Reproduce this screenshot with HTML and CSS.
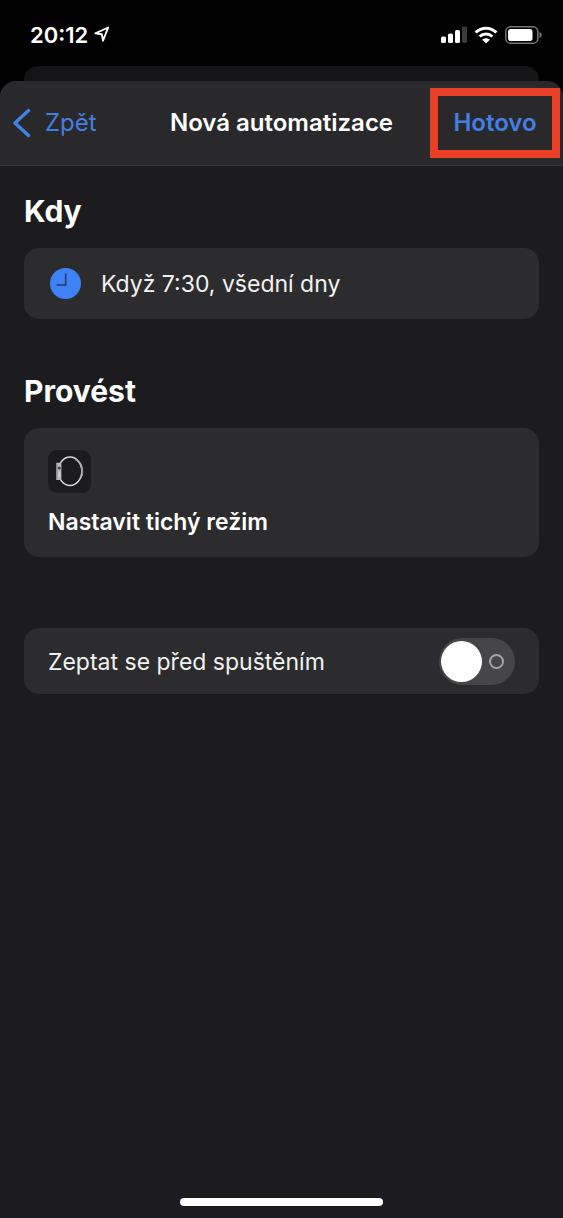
FILE: index.html
```html
<!DOCTYPE html>
<html lang="cs">
<head>
<meta charset="utf-8">
<meta name="viewport" content="width=device-width, initial-scale=1">
<title>Nová automatizace</title>
<link rel="stylesheet" href="styles.css">
</head>
<body>
<div class="status-bar">
  <div class="status-left">
    <time class="clock-time">20:12</time>
    <svg class="location" width="16" height="17" viewBox="0 0 16 17" aria-hidden="true"><path d="M1.4 7.3 14.2 1.5 9 14.6 7.8 8.3Z" fill="none" stroke="#fff" stroke-width="1.9" stroke-linejoin="round"/></svg>
  </div>
  <div class="status-right">
    <svg width="26" height="17" viewBox="0 0 26 17" aria-hidden="true"><g fill="#fff"><rect x="0" y="10.500" width="5" height="6.500" rx="1.5"/><rect x="7" y="7.500" width="5" height="9.500" rx="1.5"/><rect x="14" y="4" width="5" height="13" rx="1.5"/></g><rect x="21" y="0.500" width="5" height="16.500" rx="1.500" fill="#3b3b3b"/></svg>
    <svg width="24" height="18" viewBox="0 0 24 18" aria-hidden="true"><g fill="none" stroke="#fff" stroke-width="3"><path d="M1.600 6.500C7.500 0.700 16.500 0.700 22.400 6.500"/><path d="M5.700 10.500C9.300 7.100 14.700 7.100 18.300 10.500"/></g><path d="M8.200 13.700C10.300 11.700 13.700 11.700 15.800 13.700L12 17.500Z" fill="#fff"/></svg>
    <svg width="37" height="18" viewBox="0 0 37 18" aria-hidden="true"><rect x="0.800" y="0.800" width="32" height="16.400" rx="4.800" fill="none" stroke="#777" stroke-width="1.500"/><rect x="3" y="3" width="24.500" height="12" rx="2.800" fill="#fff"/><path d="M34.500 6V12C37.400 11 37.400 7 34.500 6Z" fill="#777"/></svg>
  </div>
</div>
<div class="back-sheet"></div>
<div class="sheet">
  <header class="nav">
    <button class="back" type="button">
      <svg width="18" height="30" viewBox="0 0 18 30" aria-hidden="true"><path d="M15.500 2.500 2 15 15.500 27.500" fill="none" stroke="currentColor" stroke-width="3.400" stroke-linecap="round" stroke-linejoin="round"/></svg>
      <span>Zpět</span>
    </button>
    <h1 class="nav-title">Nová automatizace</h1>
    <button class="done" type="button">Hotovo</button>
  </header>
  <main class="content">
    <section class="section">
      <h2 class="heading">Kdy</h2>
      <div class="card trigger">
        <svg width="31" height="31" viewBox="0 0 31 31" aria-hidden="true"><circle cx="15.500" cy="15.500" r="15.500" fill="#3d82f7"/><path d="M15.700 5.500V17H6.500" fill="none" stroke="#273f70" stroke-width="1.700"/></svg>
        <span>Když 7:30, všední dny</span>
      </div>
    </section>
    <section class="section">
      <h2 class="heading">Provést</h2>
      <div class="card action">
        <span class="app-icon">
          <svg width="43" height="43" viewBox="0 0 43 43" aria-hidden="true"><ellipse cx="22" cy="21.300" rx="11.800" ry="14.200" fill="none" stroke="#dadada" stroke-width="1.500"/><path d="M27.500 9.300C32.500 12 34.300 17 34.200 21.500C34.100 24 33.600 26 32.700 28" fill="none" stroke="#a8a8a8" stroke-width="1.800"/><path d="M34.500 17.500V26" stroke="#8d8d8d" stroke-width="1.200"/><rect x="8" y="12.800" width="5.400" height="17.200" rx="1" fill="#b9b9b9"/><path d="M8.800 13.500V29.300" stroke="#7a7a7a" stroke-width="1"/><circle cx="11.200" cy="18" r="1.600" fill="#4a4a4a"/><path d="M11.200 22V27" stroke="#dedede" stroke-width="1.200"/></svg>
        </span>
        <span class="action-name">Nastavit tichý režim</span>
      </div>
    </section>
    <label class="card ask">
      <span>Zeptat se před spuštěním</span>
      <input class="switch" type="checkbox" role="switch">
    </label>
  </main>
  <div class="home-bar"></div>
</div>
</body>
</html>
```
FILE: styles.css
```css
*,
*::before,
*::after {
  box-sizing: border-box;
}

body {
  display: flex;
  flex-direction: column;
  min-height: 100vh;
  margin: 0;
  background: #000;
  color: #fff;
  font-family: Inter, "Liberation Sans", sans-serif;
  font-size: 23px;
  line-height: 30px;
}

h1,
h2 {
  margin: 0;
}

button {
  font: inherit;
  color: #447fe3;
  background: none;
  border: 0;
  padding: 0;
}

svg {
  display: block;
}

.status-bar {
  display: flex;
  justify-content: space-between;
  align-items: center;
  height: 66px;
  padding: 3px 21px 0 30px;
}

.status-left,
.status-right {
  display: flex;
  align-items: center;
}

.status-left {
  gap: 6px;
}

.status-right {
  gap: 7px;
}

.clock-time {
  font-size: 22px;
  font-weight: 600;
}

.back-sheet {
  height: 15px;
  margin: 0 24px;
  background: #151517;
  border-radius: 14px 14px 0 0;
}

.sheet {
  display: flex;
  flex-direction: column;
  flex: 1;
  background: #1c1c1e;
  border-radius: 16px 16px 0 0;
}

.nav {
  display: grid;
  grid-template-columns: 1fr auto 1fr;
  align-items: center;
  height: 85px;
  padding: 0 3px;
  background: #29292b;
  border-bottom: 1px solid #363638;
  border-radius: 16px 16px 0 0;
}

.back {
  display: flex;
  align-items: center;
  justify-self: start;
  gap: 14px;
  padding-left: 10px;
  font-size: 24px;
}

.nav-title {
  font-size: 24px;
  font-weight: 600;
}

.done {
  justify-self: end;
  width: 130px;
  height: 70px;
  border: 8px solid #e93f26;
  font-size: 24px;
  font-weight: 600;
}

.content {
  display: flex;
  flex-direction: column;
  flex: 1;
  padding: 25px 24px;
}

.section {
  margin-bottom: 52px;
}

.heading {
  margin-bottom: 17px;
  font-size: 30px;
  font-weight: 700;
  line-height: 40px;
}

.card {
  background: #2c2c2e;
  border-radius: 15px;
}

.trigger {
  display: flex;
  align-items: center;
  gap: 20px;
  padding: 20px 26px;
  color: #f2f2f2;
}

.action {
  display: flex;
  flex-direction: column;
  gap: 14px;
  padding: 22px 24px 20px;
}

.app-icon {
  align-self: start;
  background: #1c1c1e;
  border-radius: 9px;
}

.action-name {
  font-weight: 600;
}

.ask {
  display: flex;
  justify-content: space-between;
  align-items: center;
  margin-top: 19px;
  padding: 10px 24px 9px;
  color: #f2f2f2;
}

.switch {
  appearance: none;
  display: flex;
  align-items: center;
  gap: 7px;
  width: 76px;
  height: 47px;
  margin: 0;
  padding: 2px;
  background: #464649;
  border-radius: 24px;
}

.switch::before {
  content: "";
  width: 41px;
  height: 41px;
  background: #fff;
  border-radius: 50%;
}

.switch::after {
  content: "";
  width: 15px;
  height: 15px;
  border: 2px solid #a5a5a8;
  border-radius: 50%;
}

.switch:checked {
  flex-direction: row-reverse;
  background: #30d158;
}

.home-bar {
  align-self: center;
  width: 36%;
  height: 8px;
  margin-bottom: 12px;
  background: #fff;
  border-radius: 4px;
}
```
